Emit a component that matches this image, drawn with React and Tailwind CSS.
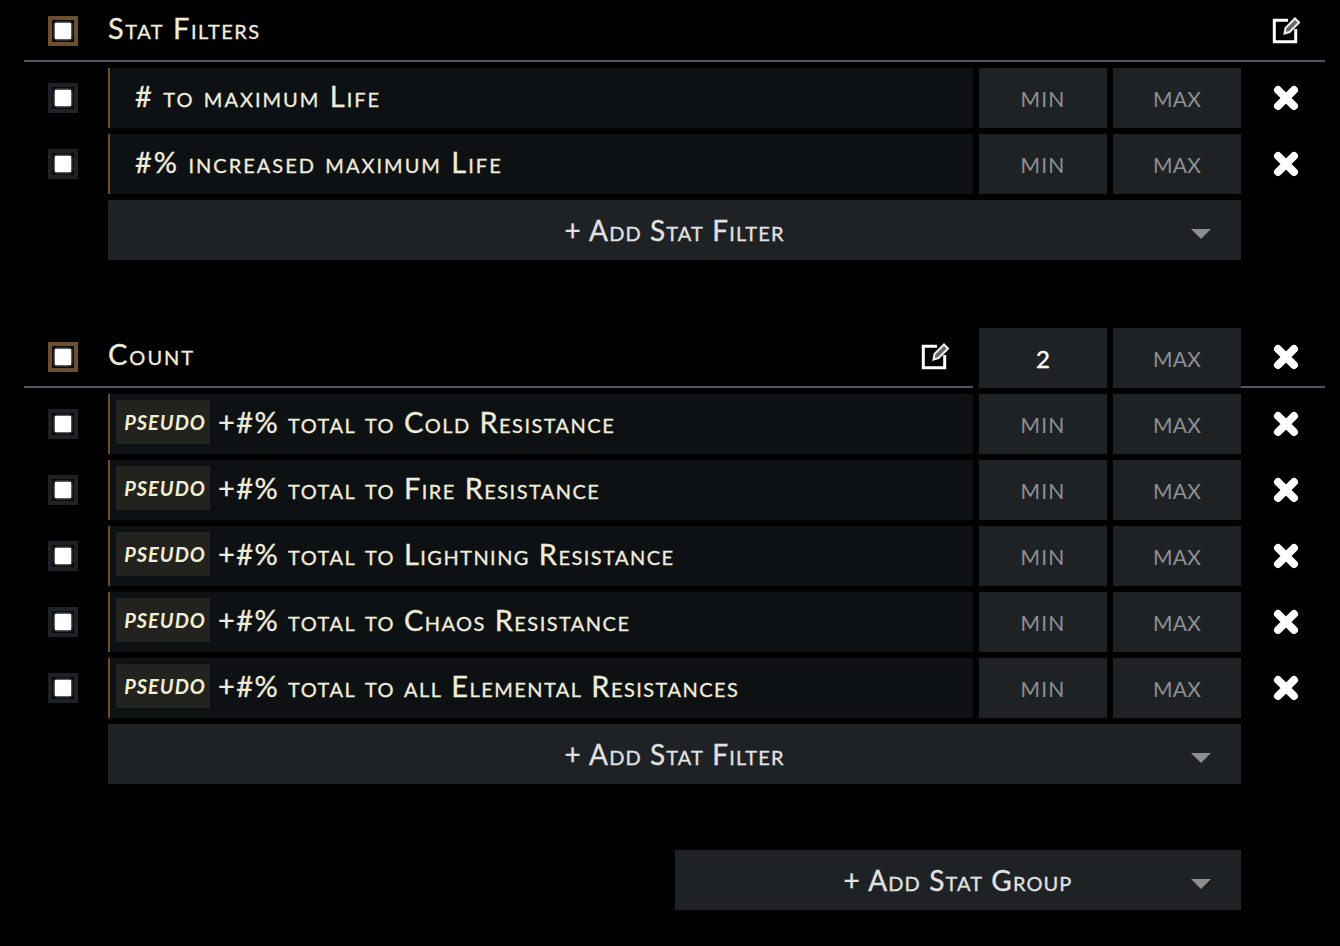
const font = { fontFamily: 'Lato, sans-serif' };

function Check({ active }) {
  return (
    <div className={`w-[30px] h-[30px] border-4 bg-black flex items-center justify-center ${active ? "border-[#6b4f2f]" : "border-[#1e2226]"}`}>
      <div className="w-4 h-4 bg-white shadow-[0_0_3px_#ffffff]" />
    </div>
  );
}

function EditIcon() {
  return (
    <svg width="28" height="28" viewBox="0 0 28 28" fill="none" className="text-white">
      <path d="M16 3.3H2.3V24.7H23.7V12" stroke="currentColor" strokeWidth="3" />
      <path d="M12.5 16.5L13.5 11L23 1.5L27 5.5L17.5 15Z" fill="#666666" stroke="#eeeeee" strokeWidth="2" />
    </svg>
  );
}

function CloseIcon() {
  return (
    <svg width="26" height="26" viewBox="0 0 26 26" className="text-white blur-[0.5px]">
      <path d="M5 5L21 21M21 5L5 21" stroke="currentColor" strokeWidth="8" strokeLinecap="round" />
    </svg>
  );
}

function Field({ value, label }) {
  const labelStyle = label === "max" ? "tracking-[0.2px]" : "tracking-[1.2px]";
  return (
    <div className={`w-[128px] h-[60px] bg-[#1f2225] flex items-center justify-center pt-px ${value ? "text-white text-[24px] [-webkit-text-stroke:0.4px_currentColor]" : `text-[#8d8f92] text-[21px] uppercase ${labelStyle}`}`}>
      {value || label}
    </div>
  );
}

function Row({ text, pseudo }) {
  return (
    <div className="flex">
      <div className="w-[84px] pl-6 ml-6 flex items-center shrink-0">
        <Check />
      </div>
      <div className={`w-[865px] h-[60px] pb-1 bg-[#0e1113] border-l-2 border-[#6b4f2f] flex items-center text-[#f0ecdc] text-[29px] [-webkit-text-stroke:0.3px_currentColor] [font-variant:small-caps] ${pseudo ? "pl-1.5 tracking-[1.45px]" : "pl-[25px] tracking-[2px]"}`}>
        {pseudo && (
          <span className="w-[94px] h-[44px] self-start mt-1.5 bg-[#22231e] flex items-center justify-center pl-1 mr-2 italic font-bold text-[20px] tracking-[1px] uppercase text-[#f2eed3] [-webkit-text-stroke:0px]">
            pseudo
          </span>
        )}
        {text}
      </div>
      <div className="flex gap-1.5 ml-1.5">
        <Field label="min" />
        <Field label="max" />
      </div>
      <div className="w-[84px] pl-8 flex items-center">
        <CloseIcon />
      </div>
    </div>
  );
}

function AddButton({ label, wide }) {
  return (
    <div className="flex justify-end pr-[99px]">
      <div className={`h-[60px] bg-[#1f2225] relative flex items-center justify-center text-[#e2e2e2] text-[28px] tracking-[1.1px] [-webkit-text-stroke:0.3px_currentColor] [font-variant:small-caps] ${wide ? "w-[566px]" : "w-[1133px]"}`}>
        {label}
        <div className="absolute right-[30px] top-[29px] w-0 h-0 border-l-[10px] border-r-[10px] border-t-[10px] border-l-transparent border-r-transparent border-t-[#8e8e8e]" />
      </div>
    </div>
  );
}

export default function App() {
  return (
    <div className="w-[1340px] h-[946px] bg-black pt-0.5 overflow-hidden" style={font}>
      {/* Stat Filters */}
      <div className="flex flex-col gap-1.5">
        <div className="ml-6 w-[1301px] h-[60px] border-b-2 border-[#56566a] flex items-center">
          <div className="pl-6 flex items-center">
            <Check active />
          </div>
          <div className="ml-[30px] pb-1.5 text-[#f0ecdc] text-[29px] tracking-[1.5px] [-webkit-text-stroke:0.3px_currentColor] [font-variant:small-caps]">Stat Filters</div>
          <div className="ml-auto mr-[25px]">
            <EditIcon />
          </div>
        </div>
        <Row text="# to maximum Life" />
        <Row text="#% increased maximum Life" />
        <AddButton label="+ Add Stat Filter" />
      </div>

      {/* Count */}
      <div className="flex flex-col gap-1.5 mt-[68px]">
        <div className="flex ml-6">
          <div className="w-[949px] h-[60px] border-b-2 border-[#56566a] flex items-center">
            <div className="pl-6 flex items-center">
              <Check active />
            </div>
            <div className="ml-[30px] pb-1.5 text-[#f0ecdc] text-[29px] tracking-[2px] [-webkit-text-stroke:0.3px_currentColor] [font-variant:small-caps]">Count</div>
            <div className="ml-auto mr-6">
              <EditIcon />
            </div>
          </div>
          <div className="flex gap-1.5 ml-1.5">
            <Field value="2" />
            <Field label="max" />
          </div>
          <div className="w-[84px] h-[60px] border-b-2 border-[#56566a] pl-8 flex items-center">
            <CloseIcon />
          </div>
        </div>
        <Row pseudo text="+#% total to Cold Resistance" />
        <Row pseudo text="+#% total to Fire Resistance" />
        <Row pseudo text="+#% total to Lightning Resistance" />
        <Row pseudo text="+#% total to Chaos Resistance" />
        <Row pseudo text="+#% total to all Elemental Resistances" />
        <AddButton label="+ Add Stat Filter" />
      </div>

      <div className="mt-[66px]">
        <AddButton wide label="+ Add Stat Group" />
      </div>
    </div>
  );
}
